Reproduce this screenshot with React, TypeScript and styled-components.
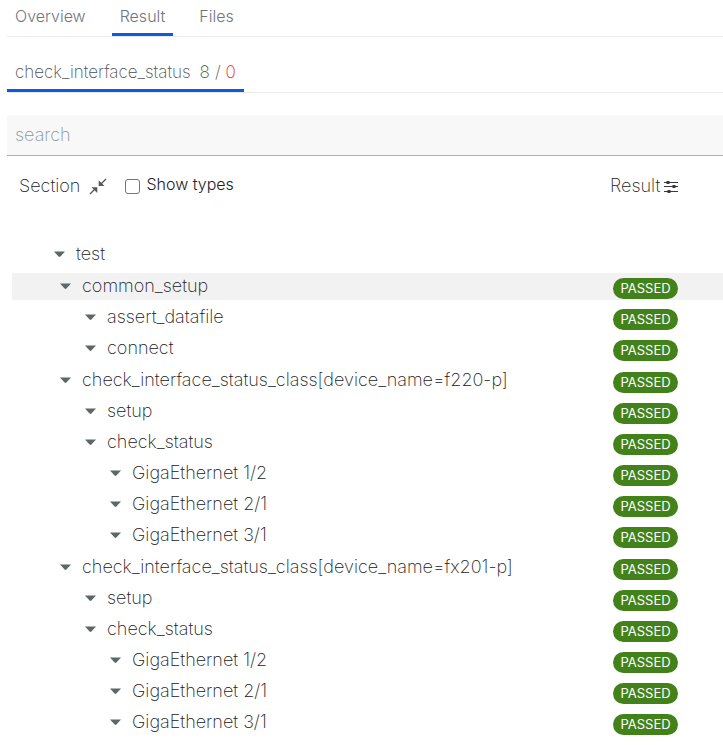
import React, { useState } from "react";
import styled, { createGlobalStyle } from "styled-components";

const GlobalStyle = createGlobalStyle`
  * { box-sizing: border-box; }
  body {
    margin: 0;
    background: #fff;
    color: #202022;
    font-family: Inter, "Liberation Sans", sans-serif;
    font-size: 18px;
    font-weight: 200;
    line-height: 26px;
  }
  button, input { font: inherit; color: inherit; }
  button { border: 0; padding: 0; background: none; cursor: pointer; }
`;

const Page = styled.main`
  padding-left: 7px;
`;

const TabBar = styled.nav`
  display: flex;
  gap: 18px;
  margin-bottom: 22px;
  border-bottom: 1px solid #e8e9eb;
`;

const Tab = styled.button<{ $active?: boolean }>`
  padding: 3px 8px;
  border-bottom: 3px solid ${(p) => (p.$active ? "#0a5be0" : "transparent")};
  color: #6f7680;
  font-size: 16px;
  font-weight: 300;
  line-height: 27px;
  white-space: nowrap;
`;

const SubTab = styled(Tab)`
  padding-top: 0;
  padding-bottom: 4px;
  color: #4c5158;
  font-size: 17px;
  font-weight: 200;
  line-height: 26px;
`;

const Count = styled.span<{ $tone?: "pass" | "fail" }>`
  color: ${(p) => (p.$tone === "pass" ? "#1c5a1a" : p.$tone === "fail" ? "#e2231a" : "inherit")};
`;

const Counts = styled.span`
  display: inline-flex;
  gap: 5px;
  margin-left: 9px;
`;

const Search = styled.input`
  display: block;
  width: 100%;
  height: 41px;
  padding: 0 8px 2px;
  border: 0;
  border-bottom: 1px solid #a6b0b8;
  border-radius: 0;
  outline: 0;
  background: #f8f8f8;
  &::placeholder { color: #8795a1; opacity: 1; }
`;

const Header = styled.div`
  display: grid;
  grid-template-columns: 1fr 113px;
  align-items: center;
  height: 30px;
  margin-top: 15px;
  padding-left: 12px;
`;

const SectionHead = styled.div`
  display: flex;
  align-items: center;
`;

const IconButton = styled.button<{ $left: number }>`
  display: flex;
  margin-left: ${(p) => p.$left}px;
  color: #58585b;
`;

const ResultHead = styled.div`
  display: flex;
  align-items: center;
`;

const TypesLabel = styled.label`
  display: flex;
  align-items: center;
  gap: 6px;
  margin-left: 18px;
  font-size: 16px;
  font-weight: 300;
  line-height: 24px;
  padding-bottom: 4px;
`;

const Checkbox = styled.input`
  appearance: none;
  width: 15px;
  height: 15px;
  margin: 4px 0 0;
  border: 1px solid #767676;
  border-radius: 3px;
  background: #fff;
  &:checked { background: #0a5be0; }
`;

const Tree = styled.ul`
  list-style: none;
  margin: 40px 0 0;
  padding: 0 0 0 5px;
`;

const Branch = styled.ul`
  list-style: none;
  margin: 0;
  padding: 0;
`;

const Item = styled.li<{ $level: number }>`
  padding-top: ${(p) => (p.$level === 1 ? 1 : 0)}px;
`;

const indents = [42, 48, 73, 98];

const Row = styled.div<{ $level: number; $active?: boolean }>`
  display: grid;
  grid-template-columns: 1fr 110px;
  height: 27px;
  margin-bottom: 4px;
  padding-left: ${(p) => indents[p.$level]}px;
  background: ${(p) => (p.$active ? "#f2f2f2" : "transparent")};
`;

const NodeButton = styled.button`
  display: flex;
  align-items: center;
  align-self: start;
  gap: 11px;
  white-space: nowrap;
`;

const Badge = styled.span`
  align-self: end;
  width: 65px;
  height: 21px;
  margin-bottom: 1px;
  border-radius: 11px;
  background: #43821a;
  color: #fff;
  font-size: 13px;
  font-weight: 400;
  line-height: 20px;
  text-align: center;
`;

const Caret = () => (
  <svg width="11" height="7" viewBox="0 0 11 7" aria-hidden="true">
    <path d="M0 0.5H11L6.4 5.6Q5.5 6.5 4.6 5.6Z" fill="#5f6669" />
  </svg>
);

const CollapseIcon = () => (
  <svg width="18" height="17" viewBox="0 0 18 17" fill="none" aria-hidden="true">
    <path d="M17 1L11.5 6.5M1 16L6.5 10.5" stroke="currentColor" strokeWidth="1.4" />
    <path d="M9.7 2.2V8H15.5ZM2.5 9.2H8.3V15Z" fill="currentColor" />
  </svg>
);

const SlidersIcon = () => (
  <svg width="14" height="13" viewBox="0 0 14 13" fill="#39393b" aria-hidden="true">
    <path d="M0 2h14v1H0zM0 6h14v1H0zM0 11h14v1H0z" />
    <path d="M2.5 1h3v3h-3zM8.5 5h3v3h-3zM3.5 10h3v3h-3z" />
  </svg>
);

type TreeNode = { name: string; active?: boolean; children?: TreeNode[] };

const deviceSection = (device: string): TreeNode => ({
  name: `check_interface_status_class[device_name=${device}]`,
  children: [
    { name: "setup" },
    {
      name: "check_status",
      children: [
        { name: "GigaEthernet 1/2" },
        { name: "GigaEthernet 2/1" },
        { name: "GigaEthernet 3/1" },
      ],
    },
  ],
});

const root: TreeNode = {
  name: "test",
  children: [
    {
      name: "common_setup",
      active: true,
      children: [{ name: "assert_datafile" }, { name: "connect" }],
    },
    deviceSection("f220-p"),
    deviceSection("fx201-p"),
  ],
};

function Node({ node, level }: { node: TreeNode; level: number }) {
  const [open, setOpen] = useState(true);
  return (
    <Item $level={level}>
      <Row $level={level} $active={node.active}>
        <NodeButton type="button" aria-expanded={open} onClick={() => setOpen(!open)}>
          <Caret />
          {node.name}
        </NodeButton>
        {level > 0 && <Badge>PASSED</Badge>}
      </Row>
      {open && node.children && (
        <Branch>
          {node.children.map((child) => (
            <Node key={child.name} node={child} level={level + 1} />
          ))}
        </Branch>
      )}
    </Item>
  );
}

export default function App() {
  return (
    <>
      <GlobalStyle />
      <Page>
        <TabBar>
          <Tab type="button">Overview</Tab>
          <Tab type="button" $active>Result</Tab>
          <Tab type="button">Files</Tab>
        </TabBar>
        <TabBar>
          <SubTab type="button" $active>
            check_interface_status
            <Counts>
              <Count $tone="pass">8</Count>
              <Count>/</Count>
              <Count $tone="fail">0</Count>
            </Counts>
          </SubTab>
        </TabBar>
        <Search type="text" placeholder="search" aria-label="search" />
        <Header>
          <SectionHead>
            Section
            <IconButton type="button" aria-label="Collapse all" $left={9}>
              <CollapseIcon />
            </IconButton>
            <TypesLabel>
              <Checkbox type="checkbox" />
              Show types
            </TypesLabel>
          </SectionHead>
          <ResultHead>
            Result
            <IconButton type="button" aria-label="Filter results" $left={4}>
              <SlidersIcon />
            </IconButton>
          </ResultHead>
        </Header>
        <Tree>
          <Node node={root} level={0} />
        </Tree>
      </Page>
    </>
  );
}
